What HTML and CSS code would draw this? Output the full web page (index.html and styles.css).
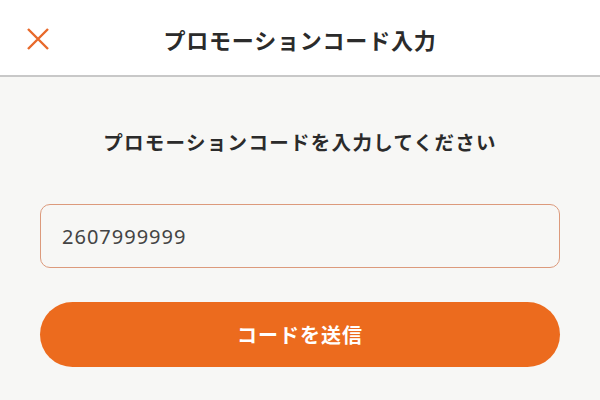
FILE: index.html
```html
<!DOCTYPE html>
<html lang="ja">
<head>
    <meta charset="UTF-8">
    <meta name="viewport" content="width=device-width, initial-scale=1.0">
    <title>プロモーションコード入力</title>
    <link rel="stylesheet" href="styles.css">
</head>
<body>
    <header class="top-bar">
        <button class="close-btn" aria-label="閉じる">
            <svg width="22" height="22" viewBox="0 0 22 22">
                <path d="M1 1 L21 21 M21 1 L1 21" stroke="currentColor" stroke-width="2.4" fill="none"/>
            </svg>
        </button>
        <h1 class="title">プロモーションコード入力</h1>
    </header>

    <main class="content">
        <p class="lead">プロモーションコードを入力してください</p>
        <input type="text" class="code-input" id="codeInput" value="2607999999" autocomplete="off">
        <button class="submit-btn" id="submitBtn">コードを送信</button>
    </main>
</body>
</html>
```

FILE: styles.css
```css
:root {
    --accent: #ec6b1e;
    --text-color: #2b2b2b;
    --background-color: #f7f7f5;
}

* {
    box-sizing: border-box;
    margin: 0;
    padding: 0;
}

html, body {
    height: 100%;
}

body {
    font-family: "Noto Sans CJK JP", "Noto Sans", sans-serif;
    background-color: var(--background-color);
    color: var(--text-color);
}

.top-bar {
    position: relative;
    height: 77px;
    background: #fff;
    border-bottom: 2px solid #c8c8c8;
    display: flex;
    align-items: center;
    justify-content: center;
}

.close-btn {
    position: absolute;
    left: 27px;
    top: 28px;
    width: 22px;
    height: 22px;
    border: none;
    background: none;
    color: #e8692a;
    cursor: pointer;
    display: flex;
}

.title {
    font-size: 22px;
    font-weight: 700;
    letter-spacing: 0.8px;
    line-height: 30px;
    margin-top: 2px;
}

.content {
    display: flex;
    flex-direction: column;
    align-items: center;
    padding: 0 40px;
}

.lead {
    margin-top: 50px;
    font-size: 19.5px;
    font-weight: 700;
    letter-spacing: 1.3px;
    line-height: 30px;
}

.code-input {
    margin-top: 47px;
    width: 100%;
    height: 64px;
    padding: 0 21px;
    border: 1.5px solid #dc9a7c;
    border-radius: 10px;
    background: var(--background-color);
    font-family: "Noto Sans", sans-serif;
    font-size: 20px;
    color: #444;
    letter-spacing: 1px;
    outline: none;
}

.submit-btn {
    margin-top: 34px;
    width: 100%;
    height: 65px;
    border: none;
    border-radius: 33px;
    background: var(--accent);
    color: #fff;
    font-family: inherit;
    font-size: 20px;
    font-weight: 700;
    letter-spacing: 1px;
    cursor: pointer;
}
```
